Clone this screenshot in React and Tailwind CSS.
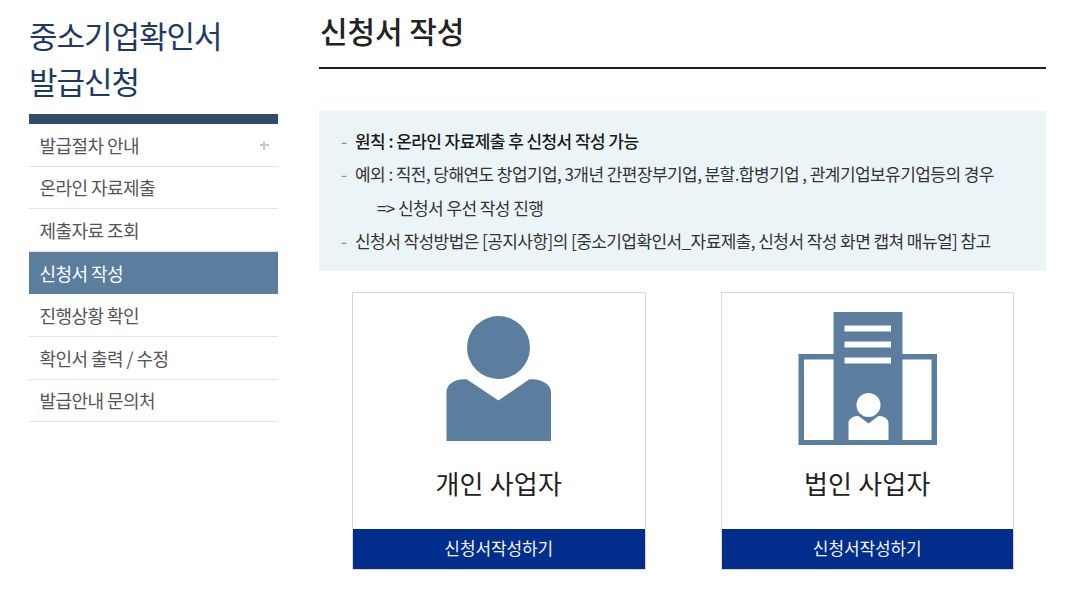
function MenuItem({ label, active, plus }) {
  return (
    <li className={`flex h-[42.6px] items-center justify-between border-b pl-[10.5px] pr-[9px] pt-[1px] text-[18px] tracking-[-0.55px] ${active ? "border-[#5b7d9e] bg-[#5b7d9e] text-white" : "border-[#e2e2e2] text-[#555555]"}`}>
      <span>{label}</span>
      {plus && (
        <span className="relative block h-[9px] w-[9px]">
          <span className="absolute left-0 top-[3.5px] h-[2px] w-[9px] bg-[#c9c9c9]"></span>
          <span className="absolute left-[3.5px] top-0 h-[9px] w-[2px] bg-[#c9c9c9]"></span>
        </span>
      )}
    </li>
  );
}

function Card({ title, icon, top }) {
  return (
    <div className="flex h-[278px] w-[293.5px] flex-col border border-[#d8d8d8] bg-white">
      <div className={`flex h-[155px] items-start justify-center ${top}`}>{icon}</div>
      <div className="flex h-[81px] items-start justify-center pt-[16px] text-[26px] leading-[38px] tracking-[0.2px] text-[#222222]">{title}</div>
      <div className="flex h-[40px] items-center justify-center bg-[#012d8c] pb-[3px] text-[17px] tracking-[-0.1px] text-[#f2f5fb]">신청서작성하기</div>
    </div>
  );
}

function Person() {
  return (
    <svg width="106" height="126" viewBox="0 0 106 126" className="block">
      <circle cx="52.5" cy="31.5" r="31.5" fill="#5b7d9e" />
      <path d="M0.5 125V76C0.5 68 10 62 21 63.5L52.5 84.5L83 63.5C94 62 105 68 105 76V125Z" fill="#5b7d9e" />
    </svg>
  );
}

function Building() {
  return (
    <svg width="140" height="134" viewBox="0 0 140 134" className="ml-[2px] block">
      <rect x="0.5" y="42" width="138.5" height="91" fill="#5b7d9e" />
      <rect x="6" y="47.5" width="30" height="80.5" fill="#fff" />
      <rect x="104" y="47.5" width="29.5" height="80.5" fill="#fff" />
      <rect x="35.5" y="0" width="69" height="133" fill="#5b7d9e" />
      <rect x="46.5" y="13.5" width="46.5" height="6" fill="#fff" />
      <rect x="46.5" y="29.5" width="46.5" height="6" fill="#fff" />
      <rect x="46.5" y="45.5" width="46.5" height="6" fill="#fff" />
      <circle cx="70.5" cy="93" r="12" fill="#fff" />
      <path d="M50.5 128V111C50.5 106.5 56 103.5 60.5 104L70.5 111.5L80.5 104C85 103.5 90.5 106.5 90.5 111V128Z" fill="#fff" />
    </svg>
  );
}

export default function App() {
  return (
    <div className="flex h-[606px] w-[1080px] overflow-hidden bg-white pl-[29px] font-['Noto_Sans_CJK_KR','Noto_Sans',sans-serif]">
      <aside className="w-[248.5px] shrink-0">
        <h1 className="pt-[12px] text-[31px] font-normal leading-[46px] tracking-[-1px] text-[#1d3a63]">중소기업확인서<br />발급신청</h1>
        <div className="mt-[10px] h-[10px] bg-[#2f4d6d]"></div>
        <ul>
          <MenuItem label="발급절차 안내" plus />
          <MenuItem label="온라인 자료제출" />
          <MenuItem label="제출자료 조회" />
          <MenuItem label="신청서 작성" active />
          <MenuItem label="진행상황 확인" />
          <MenuItem label="확인서 출력 / 수정" />
          <MenuItem label="발급안내 문의처" />
        </ul>
      </aside>
      <main className="ml-[41.5px] w-[727px]">
        <div className="h-[69px] border-b-[2px] border-[#1c1c2a] pl-[1px] pt-[8px] text-[30px] font-medium leading-[44px] tracking-[-0.1px] text-[#222222]">신청서 작성</div>
        <div className="mt-[42px] h-[160px] bg-[#ebf5f7] pl-[22px] pt-[13px] text-[17px] leading-[33.3px] tracking-[-0.57px] text-[#333333]">
          <div className="flex"><span className="w-[14px] text-[#888888]">-</span><span className="font-medium text-[#1a1a1a]">원칙 : 온라인 자료제출 후 신청서 작성 가능</span></div>
          <div className="flex"><span className="w-[14px] text-[#888888]">-</span><span>예외 : 직전, 당해연도 창업기업, 3개년 간편장부기업, 분할.합병기업 , 관계기업보유기업등의 경우</span></div>
          <div className="pl-[36px]">=&gt; 신청서 우선 작성 진행</div>
          <div className="flex"><span className="w-[14px] text-[#888888]">-</span><span>신청서 작성방법은 [공지사항]의 [중소기업확인서_자료제출, 신청서 작성 화면 캡쳐 매뉴얼] 참고</span></div>
        </div>
        <div className="mt-[21px] flex gap-[75px] pl-[33px]">
          <Card title="개인 사업자" icon={<Person />} top="pt-[23px]" />
          <Card title="법인 사업자" icon={<Building />} top="pt-[19px]" />
        </div>
      </main>
    </div>
  );
}
